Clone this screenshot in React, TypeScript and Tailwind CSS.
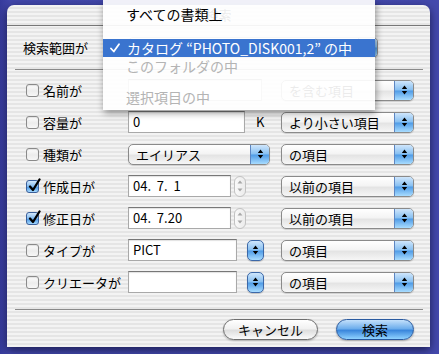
import React from 'react';

const stripes =
  'bg-[repeating-linear-gradient(180deg,#f3f3f3_0px,#f3f3f3_2px,#e5e5e5_2px,#e5e5e5_4px)]';

function Arrows({ color = '#000' }: { color?: string }) {
  return (
    <svg width="7" height="12" viewBox="0 0 7 12">
      <path d="M3.5 1.5L6.2 5H0.8Z M3.5 10.5L0.8 7H6.2Z" fill={color} />
    </svg>
  );
}

function Popup({ label, className }: { label: string; className: string }) {
  return (
    <div
      className={`flex h-[21px] shrink-0 overflow-hidden rounded-[5px] border border-[#8a8a8a] bg-[linear-gradient(180deg,#ffffff_0%,#f4f4f4_45%,#e4e4e4_55%,#f6f6f6_100%)] shadow-[0_1px_1px_rgba(0,0,0,0.15)] ${className}`}
    >
      <span className="flex-1 truncate pl-[7px] text-[13px] leading-[19px] text-black">{label}</span>
      <span className="flex w-[19px] items-center justify-center border-l border-[#5d86c2] bg-[linear-gradient(180deg,#cfe6fc_0%,#86bff1_48%,#4f9be6_52%,#a8dcff_100%)]">
        <Arrows />
      </span>
    </div>
  );
}

function Field({ value, className }: { value?: string; className: string }) {
  return (
    <div
      className={`h-[22px] shrink-0 border border-[#a9a9a9] border-t-[#777] bg-white pl-[4px] text-[13px] leading-[20px] whitespace-pre text-black shadow-[inset_0_1px_1px_rgba(0,0,0,0.12)] ${className}`}
    >
      {value}
    </div>
  );
}

function Check({ on }: { on?: boolean }) {
  if (on) {
    return (
      <span className="relative block h-[13px] w-[13px] shrink-0 rounded-[3px] border border-[#3a5f9a] bg-[linear-gradient(180deg,#d3e9fd_0%,#7fb9ef_50%,#4e98e4_55%,#a4d9ff_100%)]">
        <svg className="absolute -top-[3px] left-[1px]" width="14" height="15" viewBox="0 0 14 15">
          <path d="M2 8.5L5 12L11.5 1.5" fill="none" stroke="#000" strokeWidth="2.3" strokeLinecap="round" strokeLinejoin="round" />
        </svg>
      </span>
    );
  }
  return (
    <span className="block h-[13px] w-[13px] shrink-0 rounded-[3px] border border-[#8a8a8a] bg-[linear-gradient(180deg,#fdfdfd_0%,#ececec_55%,#f7f7f7_100%)] shadow-[inset_0_1px_1px_rgba(0,0,0,0.1)]" />
  );
}

function Row({ on, label, children }: { on?: boolean; label: string; children: React.ReactNode }) {
  return (
    <div className="flex h-[22px] items-center">
      <div className="flex w-[121px] shrink-0 items-center pl-[19px]">
        <Check on={on} />
        <span className="ml-[4px] text-[13px] leading-none whitespace-nowrap text-black">{label}</span>
      </div>
      {children}
    </div>
  );
}

function DateStepper() {
  return (
    <div className="ml-[3px] flex h-[21px] w-[12px] shrink-0 flex-col items-center justify-center gap-[4px] rounded-full border border-[#c2c2c2] bg-[linear-gradient(90deg,#f9f9f9,#ececec)]">
      <svg width="6" height="4" viewBox="0 0 6 4"><path d="M3 0.5L5.5 3.5H0.5Z" fill="#a8a8a8" /></svg>
      <svg width="6" height="4" viewBox="0 0 6 4"><path d="M3 3.5L0.5 0.5H5.5Z" fill="#a8a8a8" /></svg>
    </div>
  );
}

function BlueStepper() {
  return (
    <div className="ml-[10px] flex h-[21px] w-[17px] shrink-0 items-center justify-center rounded-[5px] border border-[#3c68a8] bg-[linear-gradient(180deg,#cfe6fc_0%,#86bff1_48%,#4f9be6_52%,#a8dcff_100%)] shadow-[0_1px_1px_rgba(0,0,0,0.2)]">
      <Arrows />
    </div>
  );
}

export default function App() {
  return (
    <div className="relative h-[354px] w-[439px] overflow-hidden bg-[linear-gradient(90deg,#363b9c_0px,#4247ab_10px,#4449ad_100%)] font-['Noto_Sans_CJK_JP','Liberation_Sans',sans-serif]">
      <div
        className={`ml-[7px] mt-[5px] flex h-[342px] w-[423px] flex-col rounded-t-[7px] ${stripes} shadow-[0_3px_10px_rgba(0,0,20,0.6)]`}
      >
        {/* title, mostly under the open menu */}
        <div className="h-[21px] shrink-0 border-b border-[#777] text-center text-[13px] leading-[20px] text-black">
          検索
        </div>

        {/* scope */}
        <div className="flex h-[43px] shrink-0 items-center pl-[16px]">
          <span className="w-[105px] text-[13px] text-black">検索範囲が</span>
          <Popup label="" className="w-[250px]" />
        </div>
        <div className="ml-[8px] mr-[7px] h-px shrink-0 bg-[#8a8a8a]" />

        <div className="flex flex-col gap-[10px] pt-[9px]">
          <Row label="名前が">
            <Field className="w-[134px]" />
            <Popup label="を含む項目" className="ml-[19px] w-[133px]" />
          </Row>
          <Row label="容量が">
            <Field value="0" className="w-[117px]" />
            <span className="ml-[11px] w-[25px] text-[13px] text-black">K</span>
            <Popup label="より小さい項目" className="w-[133px]" />
          </Row>
          <Row label="種類が">
            <Popup label="エイリアス" className="w-[142px]" />
            <Popup label="の項目" className="ml-[11px] w-[133px]" />
          </Row>
          <Row on label="作成日が">
            <Field value="04.  7.  1" className="w-[103px]" />
            <DateStepper />
            <Popup label="以前の項目" className="ml-[35px] w-[133px]" />
          </Row>
          <Row on label="修正日が">
            <Field value="04.  7.20" className="w-[103px]" />
            <DateStepper />
            <Popup label="以前の項目" className="ml-[35px] w-[133px]" />
          </Row>
          <Row label="タイプが">
            <Field value="PICT" className="w-[109px]" />
            <BlueStepper />
            <Popup label="の項目" className="ml-[17px] w-[133px]" />
          </Row>
          <Row label="クリエータが">
            <Field className="w-[109px]" />
            <BlueStepper />
            <Popup label="の項目" className="ml-[17px] w-[133px]" />
          </Row>
        </div>

        <div className="ml-[8px] mr-[7px] mt-[16px] h-px shrink-0 bg-[#8a8a8a]" />

        <div className="flex justify-end gap-[18px] pr-[16px] pt-[9px]">
          <button className="h-[21px] w-[95px] rounded-full border border-[#6e6e6e] bg-[linear-gradient(180deg,#ffffff_0%,#f1f1f1_45%,#dedede_55%,#fbfbfb_100%)] text-[13px] leading-[19px] text-black shadow-[0_1px_2px_rgba(0,0,0,0.25)]">
            キャンセル
          </button>
          <button className="h-[21px] w-[78px] rounded-full border border-[#2a5a9f] bg-[linear-gradient(180deg,#c3e0fb_0%,#6eaeec_45%,#3b87dc_55%,#8fd2ff_100%)] text-[13px] leading-[19px] text-black shadow-[0_1px_2px_rgba(0,0,0,0.3)]">
            検索
          </button>
        </div>
      </div>

      {/* open popup menu */}
      <div className="absolute left-[103px] top-0 h-[110px] w-[272px] bg-white/[0.92] text-[14px] shadow-[1px_3px_7px_rgba(0,0,0,0.4)]">
        <div className="pt-[5px]">
          <div className="h-[18px] pl-[23px] leading-[18px] text-black">すべての書類上</div>
          <div className="h-[16px]" />
          <div className="flex h-[18px] items-center bg-[#3a74cf] text-white">
            <svg className="ml-[7px] mr-[7px]" width="10" height="10" viewBox="0 0 10 10">
              <path d="M1 5.5L3.8 8.5L9 1.2" fill="none" stroke="#fff" strokeWidth="1.8" strokeLinecap="round" strokeLinejoin="round" />
            </svg>
            <span className="leading-[18px] whitespace-nowrap">カタログ “PHOTO_DISK001,2” の中</span>
          </div>
          <div className="h-[18px] pl-[23px] leading-[18px] text-[#b4b4b4]">このフォルダの中</div>
          <div className="h-[13px]" />
          <div className="h-[18px] pl-[23px] leading-[18px] text-[#b4b4b4]">選択項目の中</div>
        </div>
      </div>
    </div>
  );
}
